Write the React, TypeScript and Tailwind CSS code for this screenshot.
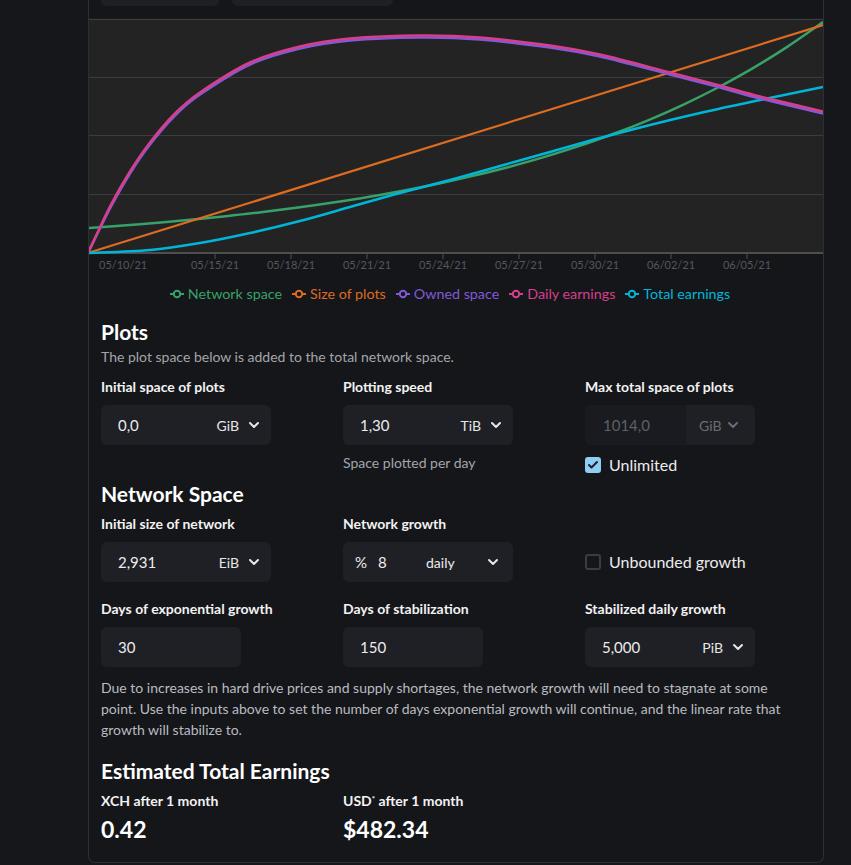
import { ChevronDown, Check } from 'lucide-react'

type P = [number, number]

function smooth(pts: P[]): string {
  let d = `M${pts[0][0]},${pts[0][1]}`
  for (let i = 0; i < pts.length - 1; i++) {
    const p0 = pts[i - 1] || pts[i]
    const p1 = pts[i]
    const p2 = pts[i + 1]
    const p3 = pts[i + 2] || p2
    const c1x = p1[0] + (p2[0] - p0[0]) / 6
    const c1y = p1[1] + (p2[1] - p0[1]) / 6
    const c2x = p2[0] - (p3[0] - p1[0]) / 6
    const c2y = p2[1] - (p3[1] - p1[1]) / 6
    d += ` C${c1x.toFixed(1)},${c1y.toFixed(1)} ${c2x.toFixed(1)},${c2y.toFixed(1)} ${p2[0]},${p2[1]}`
  }
  return d
}

const greenPts: P[] = Array.from({ length: 22 }, (_, i) => {
  const x = 88 + (735 * i) / 21
  const t = (x - 88) / 735
  return [Math.round(x * 10) / 10, Math.round((228 - 21 * (Math.exp(2.38 * t) - 1)) * 10) / 10]
})

const bluePts: P[] = [
  [88, 253], [150, 250], [200, 243], [250, 233], [300, 221], [350, 207], [400, 193],
  [450, 180], [500, 166], [550, 152], [600, 138], [650, 125], [700, 113], [760, 100], [823, 87],
]

const dailyPts: P[] = [
  [88, 253], [110, 207], [130, 172], [150, 143], [175, 114], [200, 93], [250, 63], [300, 47],
  [350, 39], [420, 36], [480, 38], [550, 46], [600, 55], [670, 73], [720, 86], [760, 97], [823, 112],
]

const ticks = [
  { x: 215, label: '05/15/21' },
  { x: 291, label: '05/18/21' },
  { x: 367, label: '05/21/21' },
  { x: 443, label: '05/24/21' },
  { x: 519, label: '05/27/21' },
  { x: 595, label: '05/30/21' },
  { x: 671, label: '06/02/21' },
  { x: 747, label: '06/05/21' },
]

const legend = [
  { label: 'Network space', color: '#38a169' },
  { label: 'Size of plots', color: '#dd6b20' },
  { label: 'Owned space', color: '#805ad5' },
  { label: 'Daily earnings', color: '#d53f8c' },
  { label: 'Total earnings', color: '#00b5d8' },
]

function Chart() {
  return (
    <svg width={734} height={268} viewBox="89 18 734 268" className="block">
      <rect x={89} y={18.5} width={734} height={235} fill="#232323" />
      {[19, 77, 135, 194].map((y) => (
        <line key={y} x1={89} x2={823} y1={y + 0.5} y2={y + 0.5} stroke="#3c3c3c" strokeWidth={1} />
      ))}
      <line x1={89} x2={823} y1={253} y2={253} stroke="#4e4e4e" strokeWidth={2} />
      {ticks.map((t) => (
        <line key={t.x} x1={t.x} x2={t.x} y1={253} y2={259} stroke="#4e4e4e" strokeWidth={1} />
      ))}
      <text x={99} y={269} fontSize={11} fill="#56575c">05/10/21</text>
      {ticks.map((t) => (
        <text key={t.label} x={t.x} y={269} fontSize={11} fill="#56575c" textAnchor="middle">
          {t.label}
        </text>
      ))}
      <path d={smooth(greenPts)} fill="none" stroke="#38a169" strokeWidth={2.5} />
      <line x1={88} y1={253} x2={823} y2={25} stroke="#dd6b20" strokeWidth={2.2} />
      <path d={smooth(bluePts)} fill="none" stroke="#00b5d8" strokeWidth={2.5} />
      <path
        d={smooth(dailyPts.map(([x, y]) => [x, x === 88 ? y : y + 1.5] as P))}
        fill="none"
        stroke="#805ad5"
        strokeWidth={2.5}
      />
      <path
        d={smooth(dailyPts.map(([x, y]) => [x, x === 88 ? y : y - 0.5] as P))}
        fill="none"
        stroke="#d53f8c"
        strokeWidth={2.5}
      />
    </svg>
  )
}

function LegendIcon({ color }: { color: string }) {
  return (
    <svg width={14} height={14} viewBox="0 0 14 14">
      <line x1={0} x2={14} y1={7} y2={7} stroke={color} strokeWidth={2} />
      <circle cx={7} cy={7} r={3.2} fill="#15161a" stroke={color} strokeWidth={2} />
    </svg>
  )
}

function Label({ children }: { children: React.ReactNode }) {
  return <div className="h-5 text-[14px] font-bold leading-5 text-[#f2f2f2]">{children}</div>
}

function UnitInput({ value, unit }: { value: string; unit: string }) {
  return (
    <div className="mt-2 flex h-10 w-[170px] items-center rounded-md bg-[#1f2026]">
      <span className="flex-1 pl-[17px] text-[15px] text-[#ececec]">{value}</span>
      <span className="text-[14px] text-[#e6e6e6]">{unit}</span>
      <ChevronDown size={16} strokeWidth={3} className="ml-[7px] mr-[9px] text-[#e6e6e6]" />
    </div>
  )
}

function PlainInput({ value }: { value: string }) {
  return (
    <div className="mt-2 flex h-10 w-[140px] items-center rounded-md bg-[#1f2026] pl-[17px] text-[15px] text-[#ececec]">
      {value}
    </div>
  )
}

export default function App() {
  return (
    <div className="min-h-screen bg-[#16171b] font-['Lato',sans-serif]">
      <div className="ml-[88px] flex w-[736px] flex-col rounded-b-[7px] border-x border-b border-[#2e2f34] bg-[#15161a] pb-[18px]">
        <div className="-mt-[34px] flex gap-[13px] pl-3">
          <div className="h-10 w-[118px] rounded-md bg-[#1f2026]" />
          <div className="h-10 w-[161px] rounded-md bg-[#1f2026]" />
        </div>
        <div className="mt-3">
          <Chart />
        </div>
        <div className="flex h-4 items-center justify-center gap-[10px] pr-[12px] text-[14.3px] leading-4">
          {legend.map((l) => (
            <div key={l.label} className="flex items-center gap-1" style={{ color: l.color }}>
              <LegendIcon color={l.color} />
              <span>{l.label}</span>
            </div>
          ))}
        </div>

        <div className="pl-3">
          <h2 className="mt-4 text-[21px] font-bold leading-7 text-white">Plots</h2>
          <p className="mt-px text-[14px] leading-5 text-[#a3a5aa]">
            The plot space below is added to the total network space.
          </p>

          <div className="mt-[10px] grid grid-cols-[242px_242px_1fr]">
            <div>
              <Label>Initial space of plots</Label>
              <UnitInput value="0,0" unit="GiB" />
            </div>
            <div>
              <Label>Plotting speed</Label>
              <UnitInput value="1,30" unit="TiB" />
              <div className="mt-2 text-[14px] leading-5 text-[#a3a5aa]">Space plotted per day</div>
            </div>
            <div>
              <Label>Max total space of plots</Label>
              <div className="mt-2 flex h-10 w-[170px] overflow-hidden rounded-md">
                <div className="flex w-[101px] items-center bg-[#1a1b20] pl-[18px] text-[15px] text-[#5f6066]">
                  1014,0
                </div>
                <div className="flex flex-1 items-center bg-[#1f2026] pl-[13px] text-[14px] text-[#6b6c71]">
                  GiB
                  <ChevronDown size={16} strokeWidth={3} className="ml-1 text-[#6b6c71]" />
                </div>
              </div>
              <div className="mt-3 flex items-center gap-2">
                <div className="flex h-4 w-4 items-center justify-center rounded-[3px] bg-[#90cdf4]">
                  <Check size={12} strokeWidth={4} className="text-[#1a202c]" />
                </div>
                <span className="text-[16px] leading-4 text-[#ececec]">Unlimited</span>
              </div>
            </div>
          </div>

          <h2 className="mt-[7px] text-[21px] font-bold leading-7 text-white">Network Space</h2>
          <div className="mt-[6px] grid grid-cols-[242px_242px_1fr]">
            <div>
              <Label>Initial size of network</Label>
              <UnitInput value="2,931" unit="EiB" />
            </div>
            <div>
              <Label>Network growth</Label>
              <div className="mt-2 flex h-10 w-[170px] items-center rounded-md bg-[#1f2026] text-[15px] text-[#ececec]">
                <span className="pl-3">%</span>
                <span className="ml-[11px] w-[48px]">8</span>
                <span className="flex-1 text-[14px]">daily</span>
                <ChevronDown size={16} strokeWidth={3} className="mr-3 text-[#e6e6e6]" />
              </div>
            </div>
            <div className="flex flex-col">
              <div className="h-5" />
              <div className="mt-2 flex h-10 items-center gap-2">
                <div className="h-4 w-4 rounded-[3px] border-2 border-[#3b3c42]" />
                <span className="text-[16px] text-[#ececec]">Unbounded growth</span>
              </div>
            </div>
          </div>

          <div className="mt-[17px] grid grid-cols-[242px_242px_1fr]">
            <div>
              <Label>Days of exponential growth</Label>
              <PlainInput value="30" />
            </div>
            <div>
              <Label>Days of stabilization</Label>
              <PlainInput value="150" />
            </div>
            <div>
              <Label>Stabilized daily growth</Label>
              <UnitInput value="5,000" unit="PiB" />
            </div>
          </div>

          <p className="mt-[10px] w-[700px] text-[14px] leading-[21px] text-[#b9bbc0]">
            Due to increases in hard drive prices and supply shortages, the network growth will need to stagnate at
            some point. Use the inputs above to set the number of days exponential growth will continue, and the
            linear rate that growth will stabilize to.
          </p>

          <h2 className="mt-[17px] text-[21px] font-bold leading-7 text-white">Estimated Total Earnings</h2>
          <div className="mt-[6px] grid grid-cols-[242px_1fr]">
            <div>
              <Label>XCH after 1 month</Label>
              <div className="mt-[3px] text-[23px] font-bold leading-[30px] text-white">0.42</div>
            </div>
            <div>
              <Label>
                USD<sup className="text-[8px]">*</sup> after 1 month
              </Label>
              <div className="mt-[3px] text-[23px] font-bold leading-[30px] text-white">$482.34</div>
            </div>
          </div>
        </div>
      </div>
    </div>
  )
}
